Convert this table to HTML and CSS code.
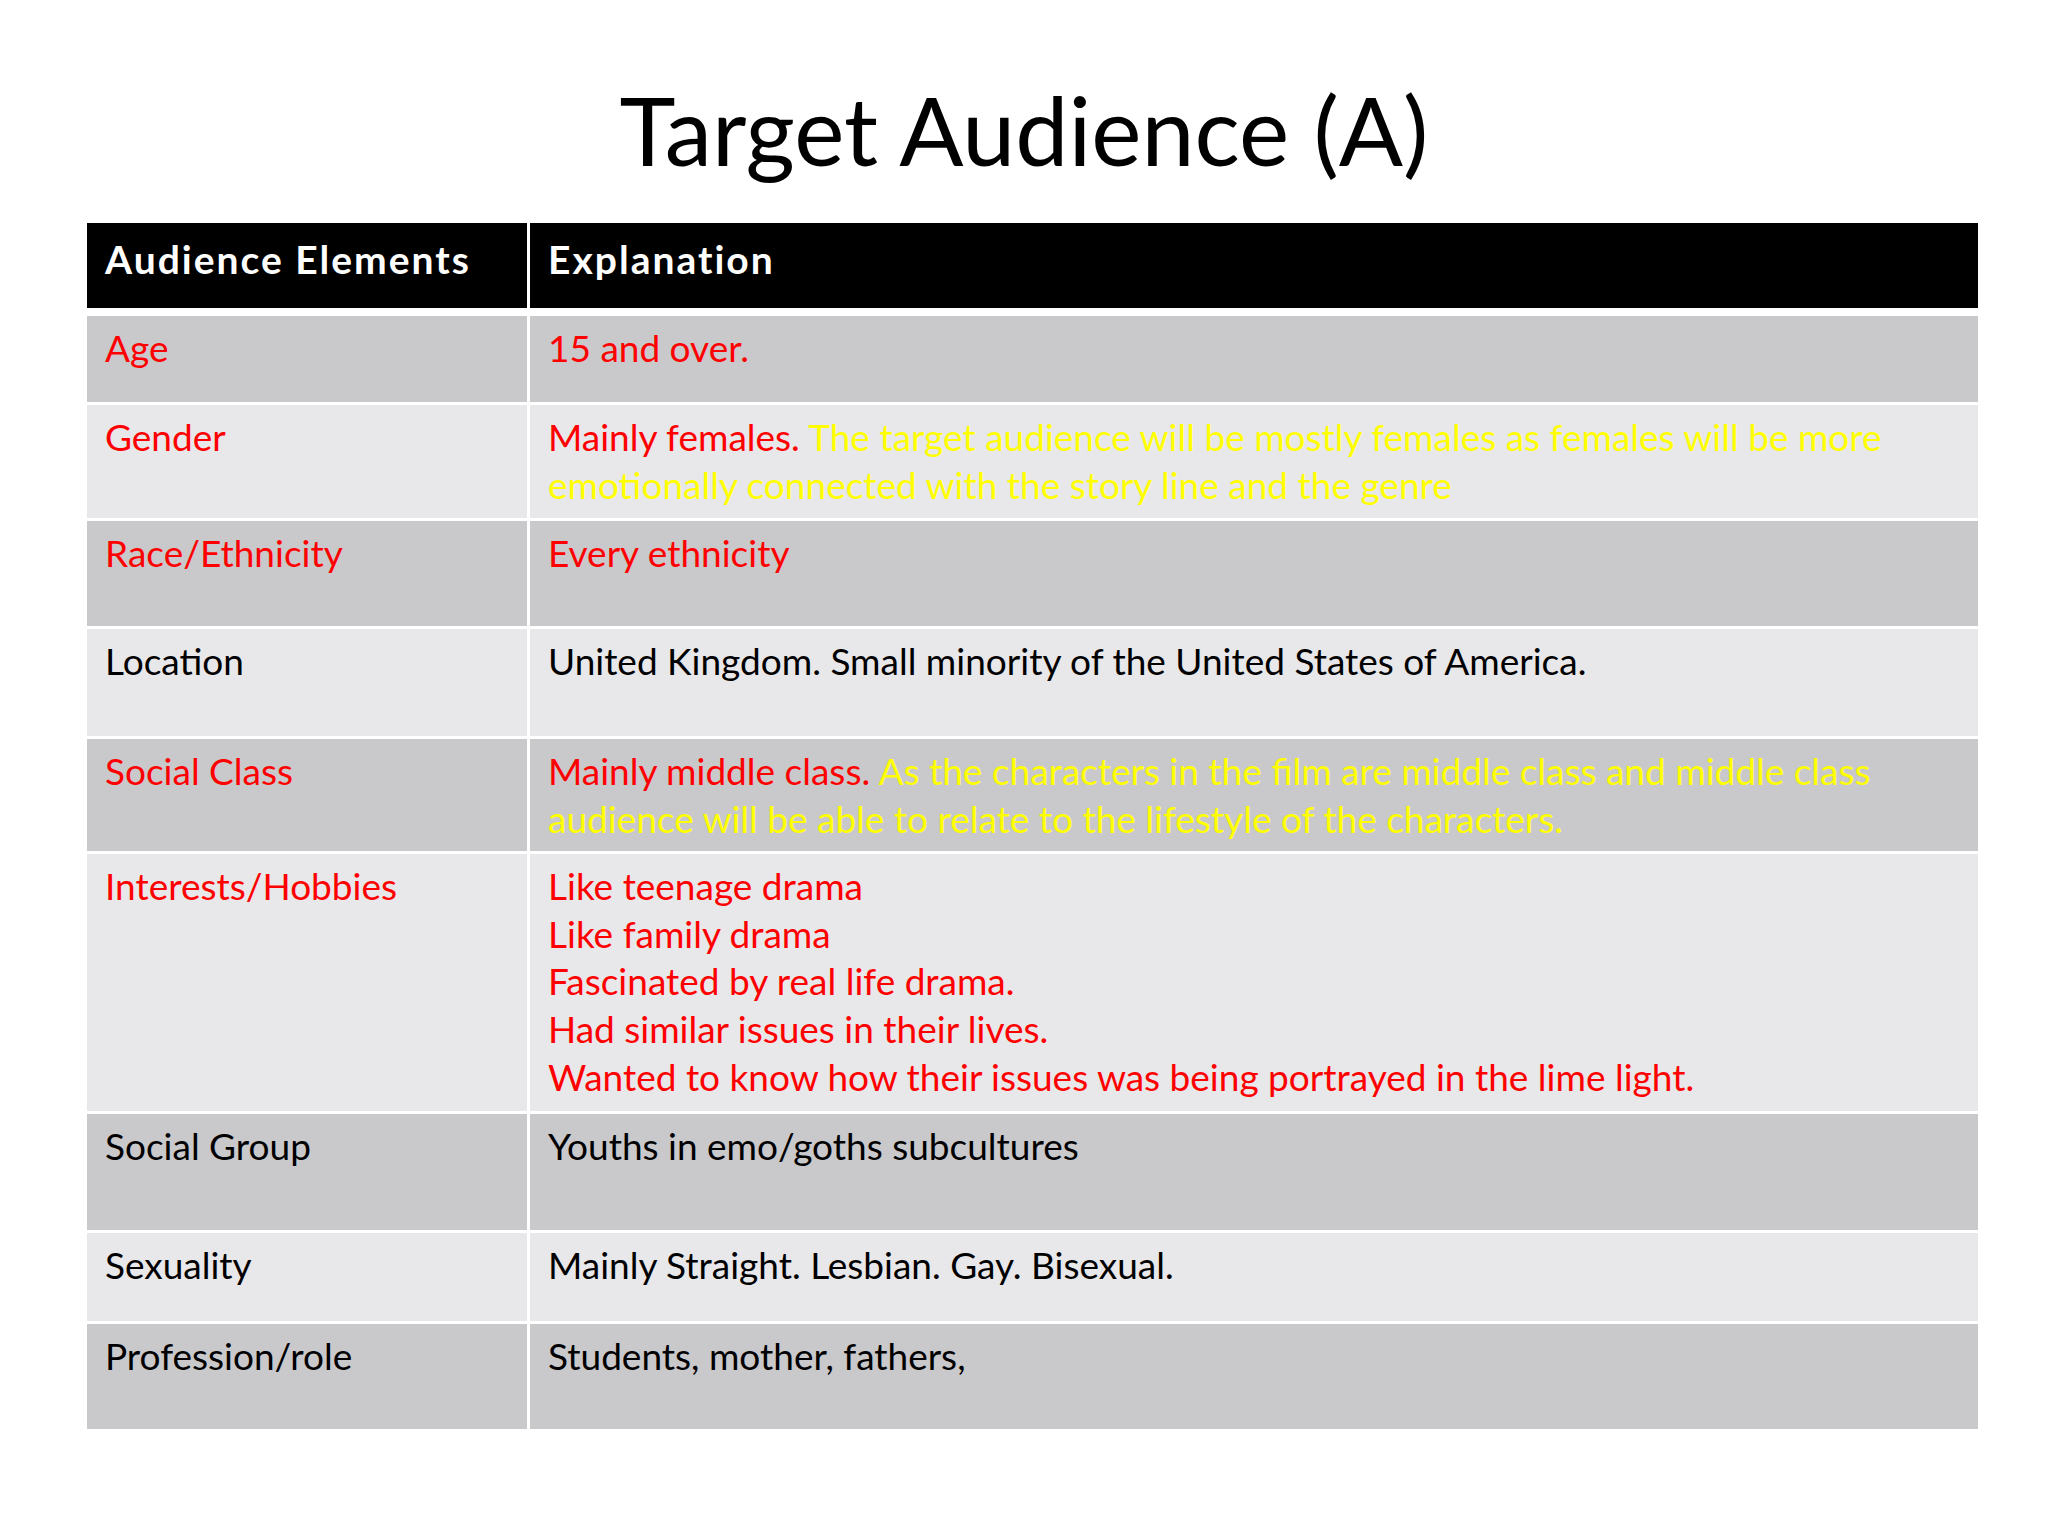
FILE: index.html
```html
<!DOCTYPE html>
<html lang="en">
<head>
<meta charset="utf-8">
<title>Target Audience (A)</title>
<link rel="stylesheet" href="styles.css">
</head>
<body>
<div class="slide">
  <h1 class="title">Target Audience (A)</h1>
  <div class="table">
    <div class="cell head">Audience Elements</div>
    <div class="cell head">Explanation</div>

    <div class="cell dark red">Age</div>
    <div class="cell dark red">15 and over.</div>

    <div class="cell light red">Gender</div>
    <div class="cell light red">Mainly females. <span class="yellow">The target audience will be mostly females as females will be more<br>emotionally connected with the story line and the genre</span></div>

    <div class="cell dark red">Race/Ethnicity</div>
    <div class="cell dark red">Every ethnicity</div>

    <div class="cell light">Location</div>
    <div class="cell light">United Kingdom. Small minority of the United States of America.</div>

    <div class="cell dark red">Social Class</div>
    <div class="cell dark red">Mainly middle class. <span class="yellow">As the characters in the film are middle class and middle class<br>audience will be able to relate to the lifestyle of the characters.</span></div>

    <div class="cell light red">Interests/Hobbies</div>
    <div class="cell light red">Like teenage drama<br>Like family drama<br>Fascinated by real life drama.<br>Had similar issues in their lives.<br>Wanted to know how their issues was being portrayed in the lime light.</div>

    <div class="cell dark">Social Group</div>
    <div class="cell dark">Youths in emo/goths subcultures</div>

    <div class="cell light">Sexuality</div>
    <div class="cell light">Mainly Straight. Lesbian. Gay. Bisexual.</div>

    <div class="cell dark">Profession/role</div>
    <div class="cell dark">Students, mother, fathers,</div>
  </div>
</div>
</body>
</html>
```

FILE: styles.css
```css
html, body {
  margin: 0;
  padding: 0;
  background: #ffffff;
}

.slide {
  width: 2048px;
  height: 1536px;
  padding-top: 76px;
  box-sizing: border-box;
  font-family: Lato, "Liberation Sans", sans-serif;
}

.title {
  margin: 0 0 40px 0;
  text-align: center;
  font-family: Lato, "Liberation Sans", sans-serif;
  font-weight: 400;
  font-size: 95px;
  line-height: 107px;
  color: #000000;
}

.table {
  margin-left: 87px;
  width: 1891px;
  display: grid;
  grid-template-columns: 440px 1448px;
  grid-template-rows: 90px 86px 113px 105px 107px 112px 257px 116px 88px 105px;
  column-gap: 3px;
  row-gap: 3px;
}

.cell {
  box-sizing: border-box;
  padding: 8px 18px 0 18px;
  font-size: 37px;
  line-height: 47.7px;
  color: #000000;
}

.head {
  background: #000000;
  color: #ffffff;
  font-weight: 700;
  font-size: 39px;
  letter-spacing: 2px;
  padding-top: 13px;
  margin-bottom: 5px;
}

.dark {
  background: #c9c8cb;
}

.light {
  background: #e8e7e9;
}

.red {
  color: #ff0000;
}

.yellow {
  color: #ffff00;
}
```
